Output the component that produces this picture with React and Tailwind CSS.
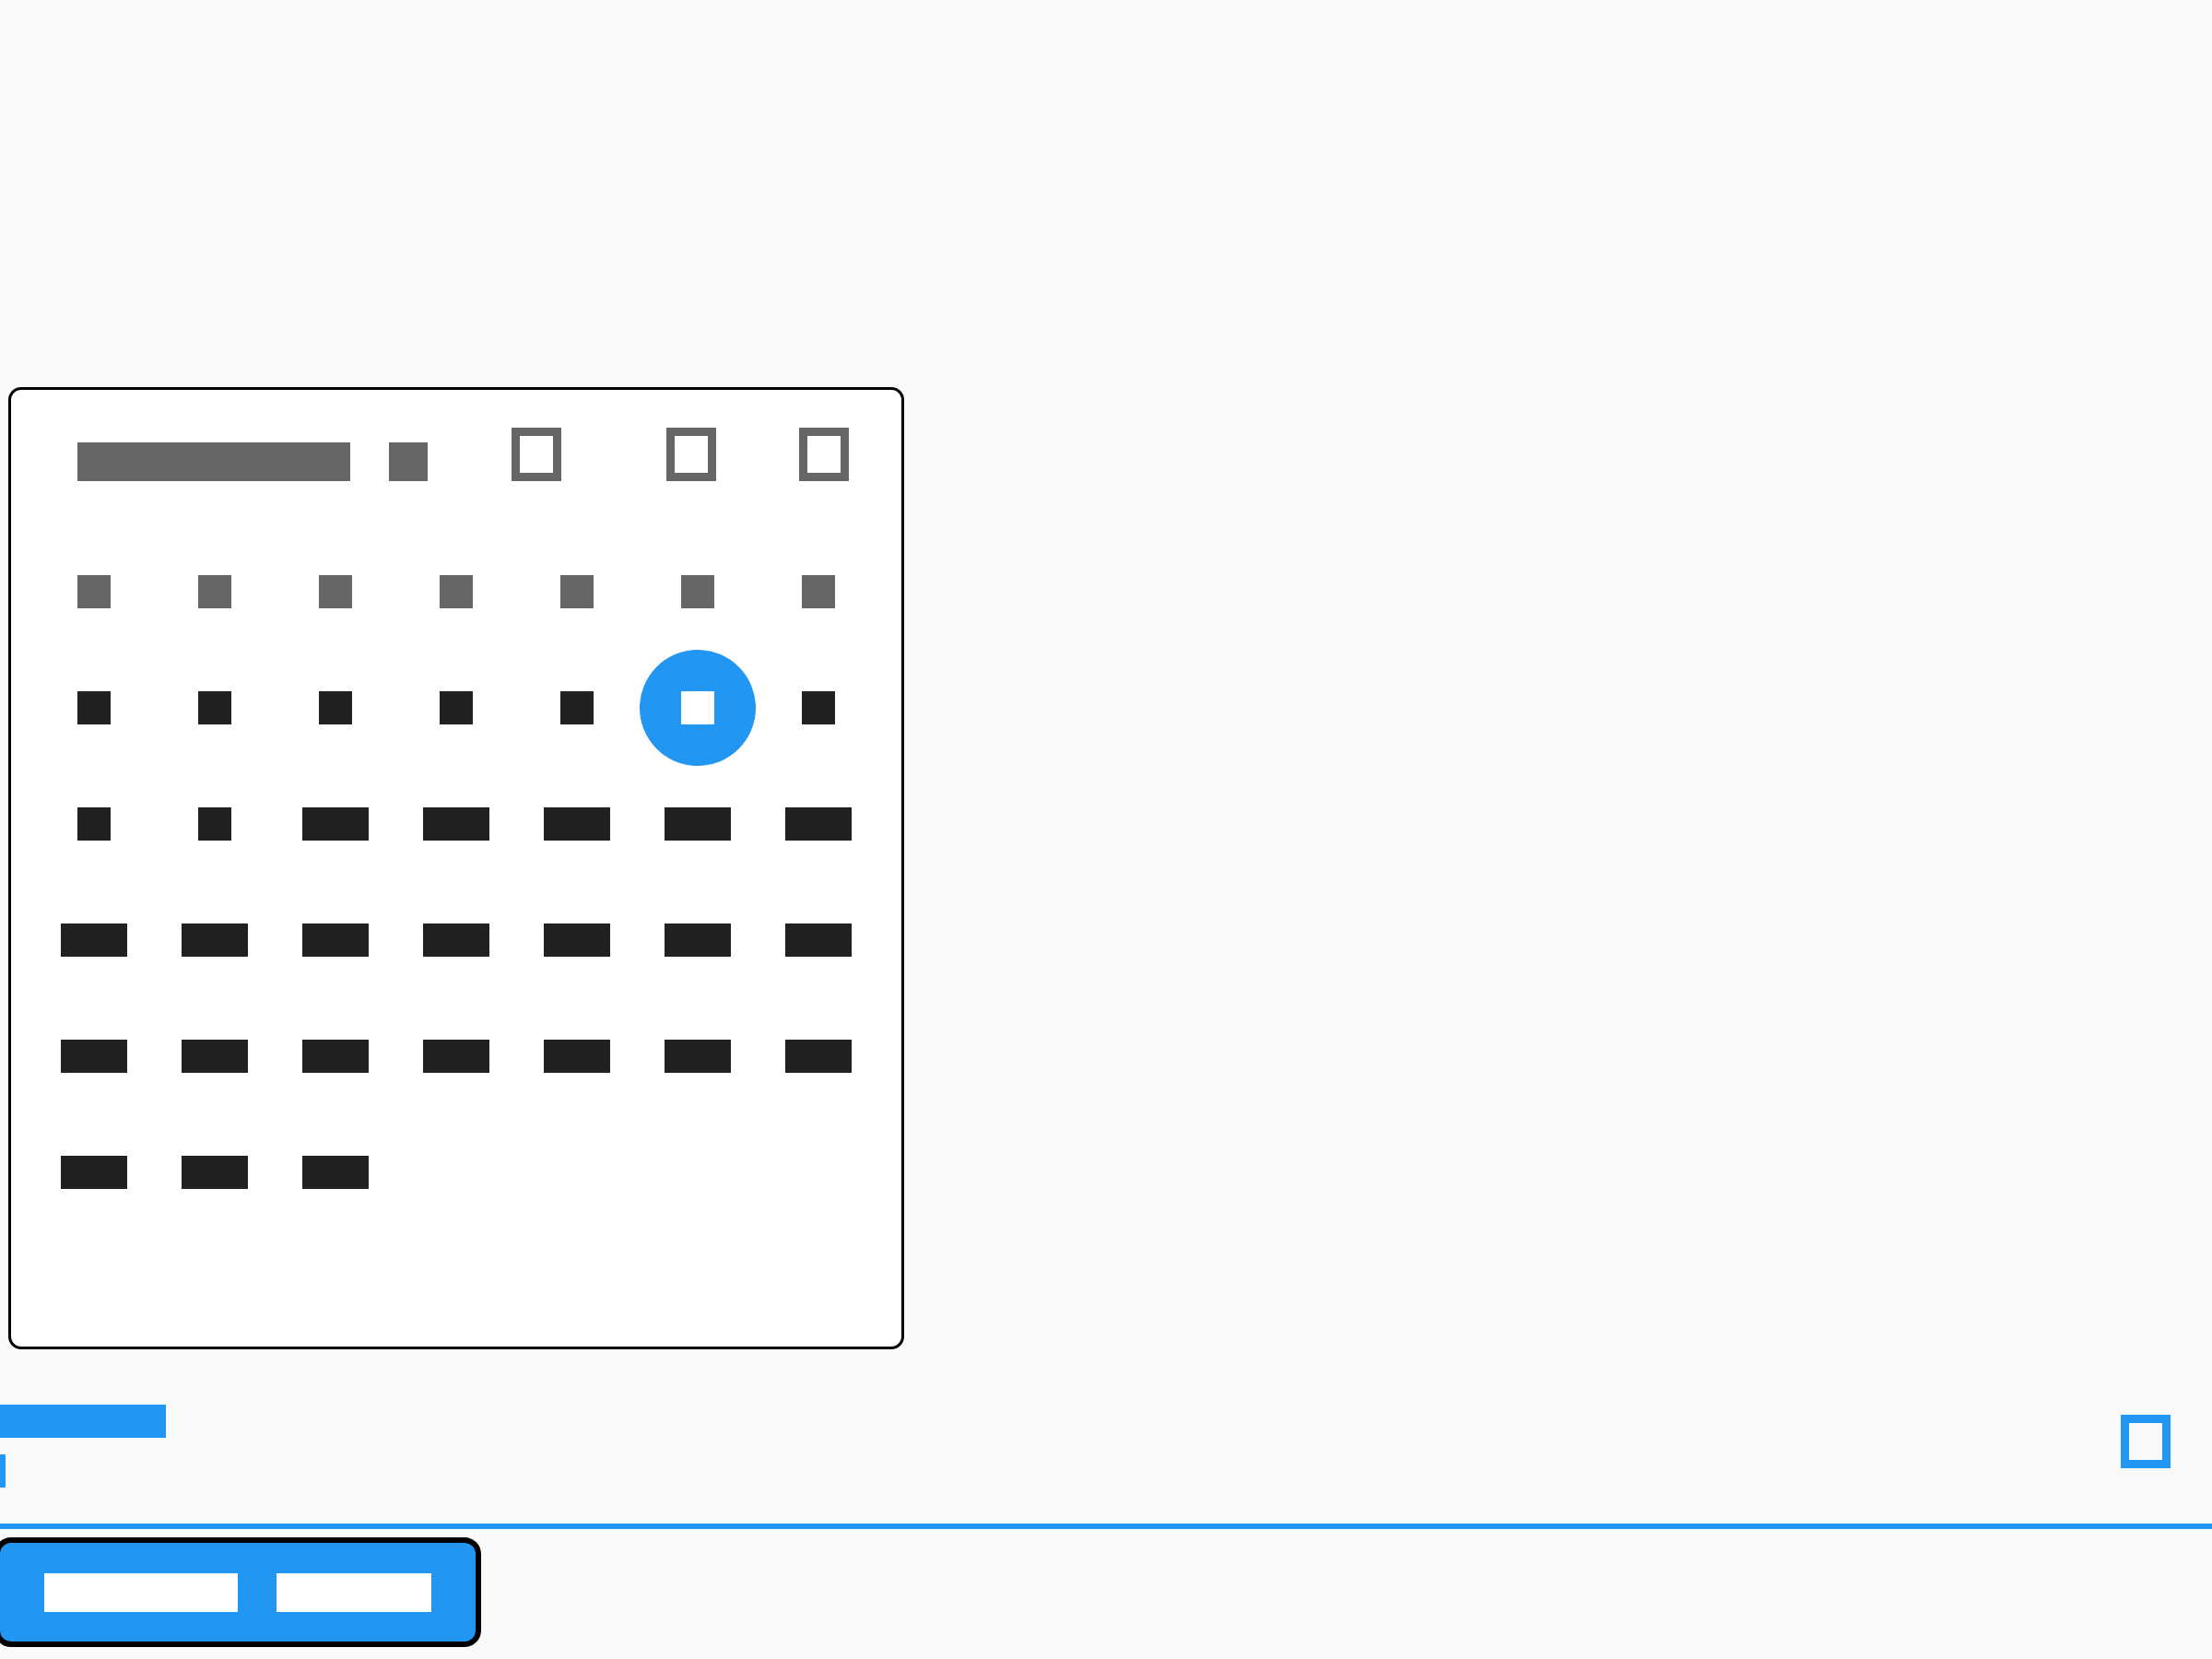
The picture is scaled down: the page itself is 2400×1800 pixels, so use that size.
import React from 'react';

const weekdays = ['S', 'M', 'T', 'W', 'T', 'F', 'S'];
const days = Array.from({ length: 31 }, (_, i) => i + 1);
const selectedDay = 6;

// text drawn the way the reference's test font draws it: one solid block per word
const Block = ({ className, children }) => (
  <span className={`inline-block overflow-hidden whitespace-nowrap text-center select-text ${className}`}>{children}</span>
);

const OutlineIcon = ({ className }) => (
  <div className={`w-[54px] h-[58px] border-[9px] shrink-0 ${className}`} />
);

const DayCell = ({ day }) => {
  const w = day > 9 ? 'w-[72px]' : 'w-[36px]';
  if (day === selectedDay) {
    return (
      <div className="h-[126px] flex items-center justify-center">
        <div className="w-[126px] h-[126px] rounded-full bg-[#2196f3] flex items-center justify-center">
          <Block className={`${w} h-[36px] bg-white text-white text-[28px] leading-[36px]`}>{day}</Block>
        </div>
      </div>
    );
  }
  return (
    <div className="h-[126px] flex items-center justify-center">
      <Block className={`${w} h-[36px] bg-[#212121] text-[#212121] text-[28px] leading-[36px]`}>{day}</Block>
    </div>
  );
};

export default function App() {
  return (
    <div className="w-[2400px] h-[1800px] overflow-hidden bg-[#fafafa] flex flex-col font-['Liberation_Sans',sans-serif]">
      {/* Calendar card */}
      <div className="mt-[420px] ml-[9px] w-[972px] h-[1044px] border-[3px] border-black rounded-[14px] bg-white flex flex-col">
        {/* Header */}
        <div className="h-[156px] flex items-start pl-[72px] pr-[57px]">
          <div className="mt-[57px] flex gap-[42px]">
            <Block className="w-[296px] h-[42px] bg-[#666666] text-[#666666] text-[32px] leading-[42px]">January</Block>
            <Block className="w-[42px] h-[42px] bg-[#666666] text-[#666666] text-[13px] leading-[42px]">2023</Block>
          </div>
          <OutlineIcon className="mt-[41px] ml-[91px] border-[#666666]" />
          <OutlineIcon className="mt-[41px] ml-auto border-[#666666]" />
          <OutlineIcon className="mt-[41px] ml-[90px] border-[#666666]" />
        </div>

        {/* Day grid */}
        <div className="px-[24px] grid grid-cols-7 auto-rows-[126px] h-[882px]">
          {weekdays.map((d, i) => (
            <div key={`w${i}`} className="h-[126px] flex items-center justify-center">
              <Block className="w-[36px] h-[36px] bg-[#666666] text-[#666666] text-[28px] leading-[36px]">{d}</Block>
            </div>
          ))}
          {days.map((d) => (
            <DayCell key={d} day={d} />
          ))}
        </div>
      </div>

      {/* Text field */}
      <div className="mt-[60px] flex">
        <div className="flex flex-col">
          <Block className="w-[180px] h-[36px] bg-[#2196f3] text-[#2196f3] text-[28px] leading-[36px]">Label</Block>
          <div className="mt-[18px] w-[6px] h-[36px] bg-[#2196f3]" />
        </div>
        <OutlineIcon className="ml-auto mt-[11px] mr-[45px] border-[#2196f3]" />
      </div>
      <div className="mt-[39px] w-full h-[6px] bg-[#2196f3]" />

      {/* Button */}
      <div className="mt-[9px] -ml-[6px] w-[528px] h-[119px] border-[6px] border-black rounded-[18px] bg-[#2196f3] flex items-center pl-[48px] gap-[42px]">
        <Block className="w-[210px] h-[42px] bg-white text-white text-[32px] leading-[42px]">Close</Block>
        <Block className="w-[168px] h-[42px] bg-white text-white text-[32px] leading-[42px]">Open</Block>
      </div>
    </div>
  );
}
